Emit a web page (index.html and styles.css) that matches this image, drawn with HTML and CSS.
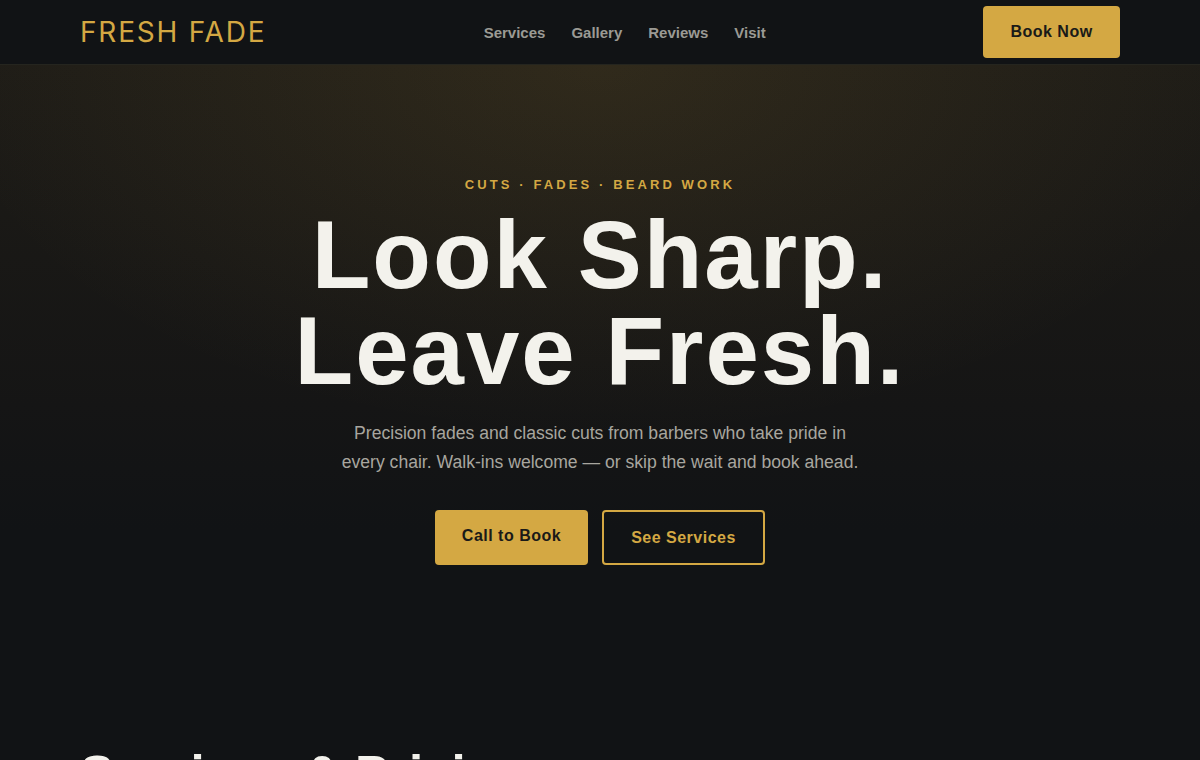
FILE: index.html
```html
<!DOCTYPE html>
<html lang="en">
<head>
<meta charset="utf-8">
<title>Fresh Fade</title>
<link rel="stylesheet" href="styles.css">
</head>
<body>
<header class="site-header">
  <div class="container header-inner">
    <a class="logo" href="#">FRESH FADE</a>
    <nav class="nav">
      <a href="#">Services</a>
      <a href="#">Gallery</a>
      <a href="#">Reviews</a>
      <a href="#">Visit</a>
    </nav>
    <a class="btn btn-solid btn-header" href="#">Book Now</a>
  </div>
</header>
<section class="hero">
  <p class="eyebrow">CUTS · FADES · BEARD WORK</p>
  <h1 class="hero-title">Look Sharp.<br>Leave Fresh.</h1>
  <p class="hero-sub">Precision fades and classic cuts from barbers who take pride in every chair. Walk-ins welcome — or skip the wait and book ahead.</p>
  <div class="hero-actions">
    <a class="btn btn-solid btn-call" href="#">Call to Book</a>
    <a class="btn btn-outline" href="#">See Services</a>
  </div>
</section>
<section class="services">
  <div class="container">
    <h2 class="section-title">Services &amp; Pricing</h2>
  </div>
</section>
</body>
</html>
```
FILE: styles.css
```css
* { box-sizing: border-box; }
html, body { margin: 0; padding: 0; }
body {
  background: #111315;
  color: #f3f2ec;
  font-family: "Liberation Sans", Arial, sans-serif;
  overflow: hidden;
}
a { text-decoration: none; }
.container {
  width: 1040px;
  margin: 0 auto;
}
.site-header {
  background: #111315;
  border-bottom: 1px solid #25251f;
}
.header-inner {
  height: 64px;
  display: flex;
  align-items: center;
  justify-content: space-between;
}
.logo {
  font-family: Inter, "Liberation Sans", sans-serif;
  font-weight: 400;
  font-size: 28px;
  letter-spacing: 1.8px;
  color: #d4a843;
}
.nav {
  display: flex;
  gap: 26px;
}
.nav a {
  color: #9b9a94;
  font-weight: 700;
  font-size: 15px;
}
.btn {
  display: inline-flex;
  align-items: center;
  justify-content: center;
  border-radius: 4px;
  font-weight: 700;
  font-size: 16px;
  letter-spacing: 0.5px;
}
.btn-solid {
  background: #d4a843;
  color: #1a1a18;
}
.btn-header {
  width: 137px;
  height: 52px;
}
.hero {
  background:
    radial-gradient(ellipse 55% 60% at 50% 0%, rgba(212, 168, 67, 0.1), rgba(212, 168, 67, 0) 100%),
    linear-gradient(180deg, #1e1c17 0%, #151515 55%, #111315 75%);
  text-align: center;
  padding: 111px 0 120px;
}
.eyebrow {
  margin: 0 0 13px;
  color: #d4a843;
  font-size: 13px;
  font-weight: 700;
  letter-spacing: 3.1px;
  line-height: 18px;
}
.hero-title {
  margin: 0;
  font-size: 96px;
  line-height: 96px;
  font-weight: 700;
  letter-spacing: 2px;
  color: #f3f2ec;
}
.hero-sub {
  width: 524px;
  margin: 20px auto 0;
  font-size: 17.6px;
  line-height: 29px;
  color: #a8a69f;
}
.hero-actions {
  display: flex;
  justify-content: center;
  gap: 14px;
  margin-top: 33px;
}
.btn-call {
  width: 153px;
  height: 55px;
  padding-bottom: 4px;
}
.btn-outline {
  width: 163px;
  height: 55px;
  border: 2px solid #d4a843;
  color: #d4a843;
  background: transparent;
}
.services {
  padding-top: 60px;
}
.section-title {
  margin: 0;
  font-size: 51px;
  font-weight: 700;
  line-height: 60px;
  color: #f3f2ec;
}
```
